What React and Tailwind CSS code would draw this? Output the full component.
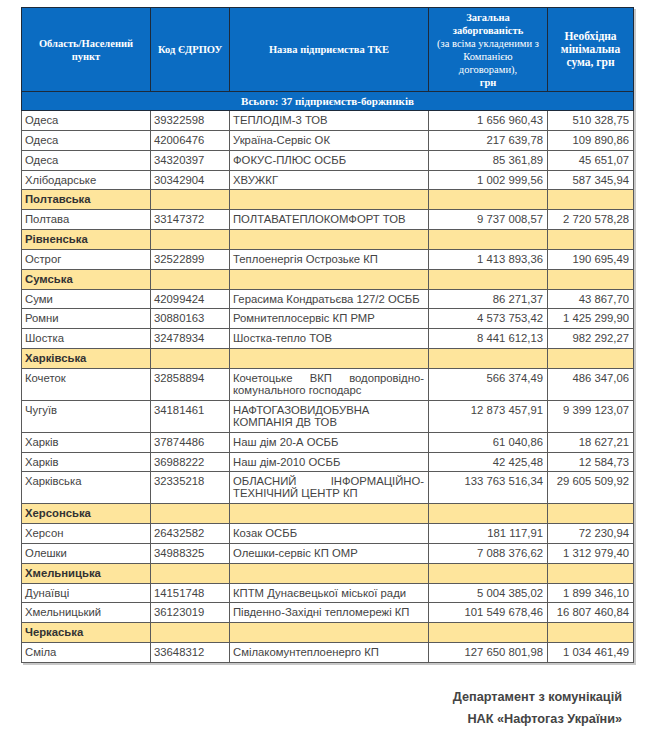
import React from "react";

const rows = [
  { t: "d", a: "Одеса", b: "39322598", c: ["ТЕПЛОДІМ-3 ТОВ"], d: "1 656 960,43", e: "510 328,75" },
  { t: "d", a: "Одеса", b: "42006476", c: ["Україна-Сервіс ОК"], d: "217 639,78", e: "109 890,86" },
  { t: "d", a: "Одеса", b: "34320397", c: ["ФОКУС-ПЛЮС ОСББ"], d: "85 361,89", e: "45 651,07" },
  { t: "d", a: "Хлібодарське", b: "30342904", c: ["ХВУЖКГ"], d: "1 002 999,56", e: "587 345,94" },
  { t: "g", a: "Полтавська" },
  { t: "d", a: "Полтава", b: "33147372", c: ["ПОЛТАВАТЕПЛОКОМФОРТ ТОВ"], d: "9 737 008,57", e: "2 720 578,28" },
  { t: "g", a: "Рівненська" },
  { t: "d", a: "Острог", b: "32522899", c: ["Теплоенергія Острозьке КП"], d: "1 413 893,36", e: "190 695,49" },
  { t: "g", a: "Сумська" },
  { t: "d", a: "Суми", b: "42099424", c: ["Герасима Кондратьєва 127/2 ОСББ"], d: "86 271,37", e: "43 867,70" },
  { t: "d", a: "Ромни", b: "30880163", c: ["Ромнитеплосервіс КП РМР"], d: "4 573 753,42", e: "1 425 299,90" },
  { t: "d", a: "Шостка", b: "32478934", c: ["Шостка-тепло ТОВ"], d: "8 441 612,13", e: "982 292,27" },
  { t: "g", a: "Харківська" },
  { t: "d", a: "Кочеток", b: "32858894", c: ["Кочетоцьке ВКП водопровідно-", "комунального господарс"], d: "566 374,49", e: "486 347,06" },
  { t: "d", a: "Чугуїв", b: "34181461", c: ["НАФТОГАЗОВИДОБУВНА", "КОМПАНІЯ ДВ ТОВ"], d: "12 873 457,91", e: "9 399 123,07" },
  { t: "d", a: "Харків", b: "37874486", c: ["Наш дім 20-А ОСББ"], d: "61 040,86", e: "18 627,21" },
  { t: "d", a: "Харків", b: "36988222", c: ["Наш дім-2010 ОСББ"], d: "42 425,48", e: "12 584,73" },
  { t: "d", a: "Харківська", b: "32335218", c: ["ОБЛАСНИЙ ІНФОРМАЦІЙНО-", "ТЕХНІЧНИЙ ЦЕНТР КП"], d: "133 763 516,34", e: "29 605 509,92" },
  { t: "g", a: "Херсонська" },
  { t: "d", a: "Херсон", b: "26432582", c: ["Козак ОСББ"], d: "181 117,91", e: "72 230,94" },
  { t: "d", a: "Олешки", b: "34988325", c: ["Олешки-сервіс КП ОМР"], d: "7 088 376,62", e: "1 312 979,40" },
  { t: "g", a: "Хмельницька" },
  { t: "d", a: "Дунаївці", b: "14151748", c: ["КПТМ Дунаєвецької міської ради"], d: "5 004 385,02", e: "1 899 346,10" },
  { t: "d", a: "Хмельницький", b: "36123019", c: ["Південно-Західні тепломережі КП"], d: "101 549 678,46", e: "16 807 460,84" },
  { t: "g", a: "Черкаська" },
  { t: "d", a: "Сміла", b: "33648312", c: ["Смілакомунтеплоенерго КП"], d: "127 650 801,98", e: "1 034 461,49" },
];

const td = "border border-[#5a5a5a] pl-[3px] pr-[4px] pt-[3px] pb-[3.85px] align-top leading-[12px]";
const th = "border border-[#1d2a3a] px-[4px] text-center align-middle font-bold";

export default function App() {
  return (
    <div className="w-[650px] h-[738px] bg-white overflow-hidden" style={{ fontFamily: '"Liberation Sans", Arial, sans-serif' }}>
      <div className="pl-[21px] pt-[7px]">
        <table className="border-collapse table-fixed w-[612px] text-[11.3px] text-[#444] shadow-[2px_2px_0_#c8c8c8]">
          <colgroup>
            <col className="w-[129px]" />
            <col className="w-[79px]" />
            <col className="w-[199px]" />
            <col className="w-[119px]" />
            <col className="w-[86px]" />
          </colgroup>
          <thead>
            <tr className="bg-[#0b6cc2] text-white h-[84px] text-[10.5px] leading-[13px]" style={{ fontFamily: '"Liberation Serif", "Times New Roman", serif' }}>
              <th className={th}>Область/Населений пункт</th>
              <th className={th}>Код ЄДРПОУ</th>
              <th className={th}>Назва підприємства ТКЕ</th>
              <th className={th}>
                <div>Загальна</div>
                <div>заборгованість</div>
                <div className="font-normal">(за всіма укладеними з Компанією договорами),</div>
                <div>грн</div>
              </th>
              <th className={th + " text-[11.5px]"}>Необхідна мінімальна сума, грн</th>
            </tr>
            <tr className="bg-[#0b6cc2] text-white h-[19px]" style={{ fontFamily: '"Liberation Serif", "Times New Roman", serif' }}>
              <th colSpan={5} className="border border-[#1d2a3a] text-center font-bold text-[11px] leading-[12px]">
                Всього: 37 підприємств-боржників
              </th>
            </tr>
          </thead>
          <tbody>
            {rows.map((r, i) =>
              r.t === "g" ? (
                <tr key={i} className="bg-[#fee59c]">
                  <td className={td + " font-bold text-[#333]"}>{r.a}</td>
                  <td className={td}></td>
                  <td className={td}></td>
                  <td className={td}></td>
                  <td className={td}></td>
                </tr>
              ) : (
                <tr key={i} className="bg-white">
                  <td className={td}>{r.a}</td>
                  <td className={td}>{r.b}</td>
                  <td className={td}>
                    {r.c.map((line, j) =>
                      j < r.c.length - 1 ? (
                        <div key={j} className="text-justify [text-align-last:justify]">{line}</div>
                      ) : (
                        <div key={j}>{line}</div>
                      )
                    )}
                  </td>
                  <td className={td + " text-right whitespace-nowrap"}>{r.d}</td>
                  <td className={td + " text-right whitespace-nowrap"}>{r.e}</td>
                </tr>
              )
            )}
          </tbody>
        </table>
      </div>
      <div className="mt-[23px] pr-[28px] text-right font-bold text-[12.7px] leading-[22px] text-[#444]">
        <div>Департамент з комунікацій</div>
        <div>НАК «Нафтогаз України»</div>
      </div>
    </div>
  );
}
